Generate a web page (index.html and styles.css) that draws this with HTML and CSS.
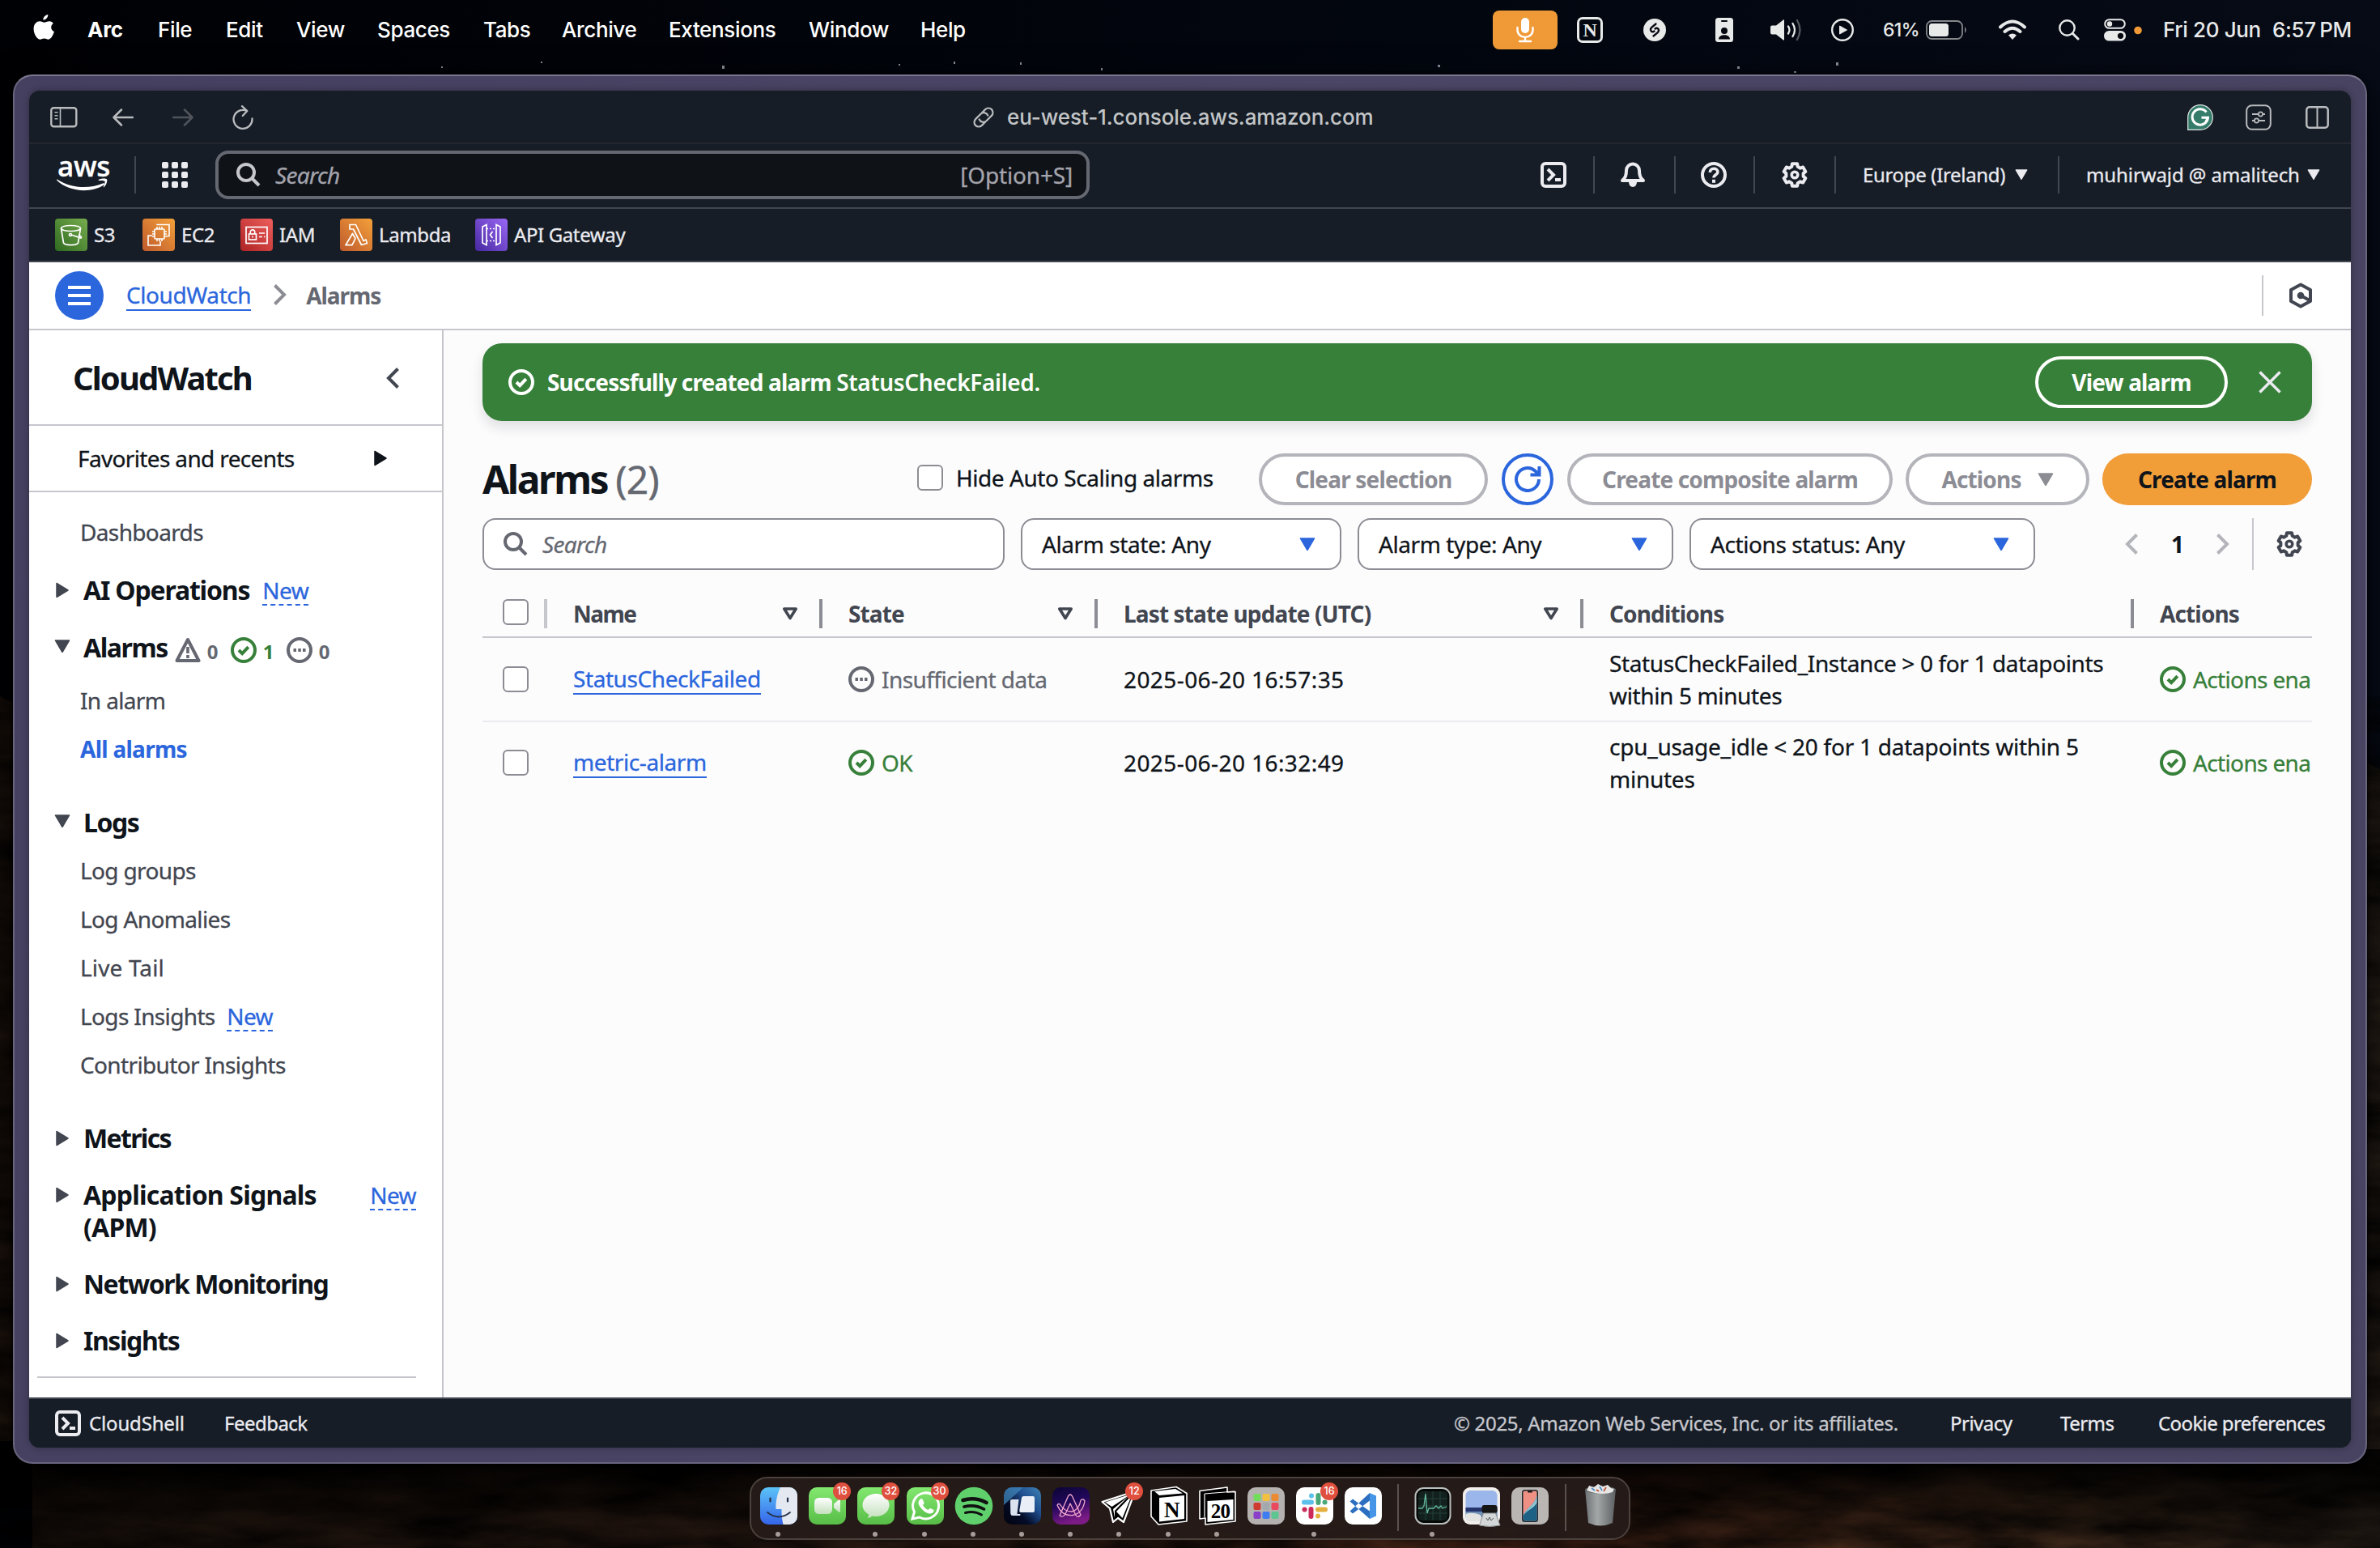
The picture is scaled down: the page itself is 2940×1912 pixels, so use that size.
FILE: index.html
```html
<!DOCTYPE html>
<html lang="en">
<head>
<meta charset="utf-8">
<title>Alarms | CloudWatch</title>
<link rel="stylesheet" href="styles.css">
</head>
<body>
<svg class="defs" width="0" height="0">
  <defs>
    <symbol id="ok" viewBox="0 0 32 32"><circle cx="16" cy="16" r="14" fill="none" stroke="currentColor" stroke-width="4"/><path d="M10 16l4.2 4.2 7.6-8" fill="none" stroke="currentColor" stroke-width="4"/></symbol>
    <symbol id="pending" viewBox="0 0 32 32"><circle cx="16" cy="16" r="14" fill="none" stroke="currentColor" stroke-width="4"/><path d="M8.5 16h3.5M14.3 16h3.5M20 16h3.5" stroke="currentColor" stroke-width="4"/></symbol>
    <symbol id="glass" viewBox="0 0 32 32"><circle cx="13" cy="13" r="10" fill="none" stroke="currentColor" stroke-width="4"/><path d="M20 20l9 9" stroke="currentColor" stroke-width="4"/></symbol>
    <symbol id="gear" viewBox="0 0 32 32"><path d="M12.3 5.85L12.85 2.36H19.15L19.7 5.85L22.94 7.73L26.24 6.45L29.39 11.91L26.64 14.12V17.88L29.39 20.09L26.24 25.55L22.94 24.27L19.7 26.15L19.15 29.64H12.85L12.3 26.15L9.06 24.27L5.76 25.55L2.61 20.09L5.36 17.88V14.12L2.61 11.91L5.76 6.45L9.06 7.73Z" fill="none" stroke="currentColor" stroke-width="4" stroke-linejoin="round"/><circle cx="16" cy="16" r="3.8" fill="none" stroke="currentColor" stroke-width="3.6"/></symbol>
    <symbol id="shell" viewBox="0 0 32 32"><rect x="2" y="2" width="28" height="28" rx="4" fill="none" stroke="currentColor" stroke-width="4"/><path d="M9 9l7 7-7 7M18 22h7" fill="none" stroke="currentColor" stroke-width="4"/></symbol>
    <symbol id="down" viewBox="0 0 20 16"><path d="M1.5 1h17L10 15.500z" fill="currentColor" stroke="currentColor" stroke-width="1.500" stroke-linejoin="round"/></symbol>
    <symbol id="right" viewBox="0 0 16 20"><path d="M1 1.500v17L15 10z" fill="currentColor" stroke="currentColor" stroke-width="1.500" stroke-linejoin="round"/></symbol>
    <symbol id="sort" viewBox="0 0 20 16"><path d="M2.800 2h14.400L10 13.500z" fill="none" stroke="currentColor" stroke-width="3.600" stroke-linejoin="round"/></symbol>
    <symbol id="lt" viewBox="0 0 16 26"><path d="M14.500 1.500L3 13l11.500 11.500" fill="none" stroke="currentColor" stroke-width="4"/></symbol>
    <symbol id="gt" viewBox="0 0 16 26"><path d="M1.500 1.500L13 13 1.500 24.500" fill="none" stroke="currentColor" stroke-width="4"/></symbol>
    <linearGradient id="gGreen" x1="0" y1="1" x2="1" y2="0"><stop offset="0" stop-color="#2f6a20"/><stop offset="1" stop-color="#77ad4e"/></linearGradient>
    <linearGradient id="gOrange" x1="0" y1="1" x2="1" y2="0"><stop offset="0" stop-color="#bf5a2c"/><stop offset="1" stop-color="#f3a03a"/></linearGradient>
    <linearGradient id="gRed" x1="0" y1="1" x2="1" y2="0"><stop offset="0" stop-color="#ad2223"/><stop offset="1" stop-color="#ee5f5c"/></linearGradient>
    <linearGradient id="gPurple" x1="0" y1="1" x2="1" y2="0"><stop offset="0" stop-color="#4628a0"/><stop offset="1" stop-color="#9b68f5"/></linearGradient>
    <linearGradient id="gLime" x1="0" y1="0" x2="0" y2="1"><stop offset="0" stop-color="#82e870"/><stop offset="1" stop-color="#58bd46"/></linearGradient>
    <linearGradient id="gPearl" x1="0" y1="0" x2="0" y2="1"><stop offset="0" stop-color="#fff"/><stop offset="1" stop-color="#c4e0bd"/></linearGradient>
    <linearGradient id="gSky" x1="0" y1="0" x2="0" y2="1"><stop offset="0" stop-color="#5cc3f7"/><stop offset="1" stop-color="#3565ea"/></linearGradient>
    <linearGradient id="gCards" x1="1" y1="0" x2="0" y2="1"><stop offset="0" stop-color="#3f83b5"/><stop offset=".35" stop-color="#1f4f90"/><stop offset=".65" stop-color="#050c28"/><stop offset="1" stop-color="#01030c"/></linearGradient>
    <linearGradient id="gArc" x1="0" y1="0" x2=".3" y2="1"><stop offset="0" stop-color="#0b0535"/><stop offset=".5" stop-color="#22085c"/><stop offset="1" stop-color="#7c1a86"/></linearGradient>
    <linearGradient id="gBin" x1="0" y1="0" x2="1" y2="0"><stop offset="0" stop-color="#6d7173"/><stop offset=".4" stop-color="#a4a7a8"/><stop offset="1" stop-color="#5c6062"/></linearGradient>
  </defs>
</svg>
<svg class="wallpaper" width="2940" height="1912" viewBox="0 0 2940 1912">
  <defs>
    <linearGradient id="sky" x1="0" y1="0" x2="1" y2="0"><stop offset="0" stop-color="#000104"/><stop offset=".6" stop-color="#02060f"/><stop offset="1" stop-color="#060b16"/></linearGradient>
    <linearGradient id="ground" x1="0" y1="0" x2="1" y2="0"><stop offset="0" stop-color="#1c120c"/><stop offset=".35" stop-color="#2a1a12"/><stop offset=".65" stop-color="#432215"/><stop offset=".85" stop-color="#412a1b"/><stop offset="1" stop-color="#241c16"/></linearGradient>
    <linearGradient id="shade" x1="0" y1="0" x2="0" y2="1"><stop offset="0" stop-color="#000" stop-opacity=".85"/><stop offset="1" stop-color="#000" stop-opacity=".05"/></linearGradient>
    <filter id="rock" x="0" y="0" width="100%" height="100%"><feTurbulence type="fractalNoise" baseFrequency=".008 .03" numOctaves="5" seed="7"/><feColorMatrix values="0 0 0 0 0  0 0 0 0 0  0 0 0 0 0  1.500 0 0 0 -.35"/></filter>
  </defs>
  <rect width="2940" height="1912" fill="url(#sky)"/>
  <path d="M0 860L40 880V1912H2940V950l-40-20V1780H0z" fill="url(#ground)"/>
  <rect y="860" width="2940" height="1052" filter="url(#rock)"/>
  <rect y="1790" width="2940" height="122" fill="url(#shade)"/>
  <g fill="#8b919c"><rect x="545" y="82" width="2" height="2"/><rect x="892" y="81" width="3" height="4"/><rect x="668" y="76" width="2" height="2"/><rect x="1110" y="79" width="2" height="2"/><rect x="1178" y="76" width="2" height="3"/><rect x="1260" y="77" width="2" height="3"/><rect x="1360" y="84" width="2" height="3"/><rect x="1776" y="80" width="3" height="3"/><rect x="2146" y="82" width="3" height="3"/><rect x="2268" y="77" width="3" height="4"/><rect x="2216" y="88" width="3" height="2"/></g>
</svg>

<div class="screen">
  <header class="menubar">
    <nav class="menus">
      <svg width="27" height="32" viewBox="0 0 27 32"><path d="M18.300 0c.3 3.400-2.800 6.700-5.900 6.600C12 3.500 15.200.4 18.300 0zM24.800 10.900c-3.300 2-3.900 7.700 1.200 10.200-1.500 4.800-4.400 9.700-7.400 9.700-2 0-2.500-1.200-4.900-1.200s-3.100 1.200-5 1.200C4.600 30.800.6 23.900.6 17.600.6 11.700 4.300 8.300 8.100 8.300c2.400 0 4.100 1.500 5.700 1.500 1.500 0 3.400-1.600 6.300-1.600 1.900 0 3.700 1 4.700 2.700z" fill="#fff"/></svg>
      <b>Arc</b><span>File</span><span>Edit</span><span>View</span><span>Spaces</span><span>Tabs</span><span>Archive</span><span>Extensions</span><span>Window</span><span>Help</span>
    </nav>
    <div class="tray">
      <span class="mic"><svg width="22" height="32" viewBox="0 0 22 32"><rect x="6" y="1" width="10" height="19" rx="5" fill="#fff"/><path d="M1.500 13v3a9.500 9 0 0 0 19 0v-3M11 25v4M4 30h14" fill="none" stroke="#fff" stroke-width="2.400" stroke-linecap="round"/></svg></span>
      <span class="notion">N</span>
      <svg width="28" height="28" viewBox="0 0 28 28"><circle cx="14" cy="14" r="14" fill="#e8e9e9"/><path d="M15.500 6.500l-5 4.200c-3.500 3.200 0 7.300 3 4.800M12.500 21.500l5-4.200c3.500-3.200 0-7.300-3-4.800" fill="none" stroke="#05080f" stroke-width="2.300" stroke-linecap="round"/></svg>
      <svg width="22" height="30" viewBox="0 0 22 30"><rect width="22" height="30" rx="3.500" fill="#e8e9e9"/><rect x="7" y="3" width="8" height="2" rx="1" fill="#05080f"/><circle cx="11" cy="16" r="4" fill="#05080f"/><path d="M4 26.500c0-7 14-7 14 0z" fill="#05080f"/></svg>
      <svg width="39" height="28" viewBox="0 0 39 28"><path d="M0 10.500q0-2 2-2h5L16 1.500q1-.8 1 .8v23.500q0 1.500-1 .7L7 19.500H2q-2 0-2-2z" fill="#e8e9e9"/><path d="M22 9.500q3 4.500 0 9M27.500 6q5 8 0 16" fill="none" stroke="#e8e9e9" stroke-width="2.300" stroke-linecap="round"/><path d="M33 2q7 12 0 24" fill="none" stroke="#55585d" stroke-width="2.300" stroke-linecap="round"/></svg>
      <svg width="28" height="28" viewBox="0 0 28 28"><circle cx="14" cy="14" r="12.800" fill="none" stroke="#e8e9e9" stroke-width="2.400"/><path d="M10.500 9v10l9-5z" fill="#e8e9e9" stroke="#e8e9e9" stroke-linejoin="round"/></svg>
      <span class="pct">61%</span>
      <svg width="52" height="24" viewBox="0 0 52 24"><rect x="1" y="1" width="44" height="22" rx="6.500" fill="none" stroke="#85878b" stroke-width="1.800"/><rect x="4" y="4" width="24" height="16" rx="3.500" fill="#e8e9e9"/><path d="M48 8q3.500 4 0 8z" fill="#85878b"/></svg>
      <svg width="34" height="26" viewBox="0 0 34 26"><path d="M2 9.500q15-14 30 0M7.500 15q9.500-8.500 19 0" fill="none" stroke="#e8e9e9" stroke-width="4" stroke-linecap="round"/><path d="M12 19.500q5-4 10 0L17 25z" fill="#e8e9e9"/></svg>
      <svg width="26" height="26" viewBox="0 0 26 26"><circle cx="10.500" cy="10.500" r="9.200" fill="none" stroke="#e8e9e9" stroke-width="2.400"/><path d="M17.500 17.500l6.500 6.500" stroke="#e8e9e9" stroke-width="3" stroke-linecap="round"/></svg>
      <svg width="47" height="28" viewBox="0 0 47 28"><rect x="1.200" y="1.200" width="24.600" height="10.600" rx="5.300" fill="none" stroke="#e8e9e9" stroke-width="2"/><circle cx="7" cy="6.500" r="3.200" fill="#e8e9e9"/><rect y="15" width="27" height="12.600" rx="6.300" fill="#e8e9e9"/><circle cx="20.500" cy="21.300" r="3.600" fill="#05080f"/><circle cx="42" cy="14.500" r="4.800" fill="#f09a37"/></svg>
      <span>Fri 20 Jun</span><span class="time">6:57 PM</span>
    </div>
  </header>

  <main class="window">
   <div class="page">
    <div class="urlbar">
      <svg width="34" height="26" viewBox="0 0 34 26"><rect x="1.300" y="1.300" width="31" height="23" rx="3" fill="none" stroke="#b9bbbe" stroke-width="2.400"/><path d="M12.500 1v24M5.500 6.800h4M5.500 10.800h4M5.500 14.800h4" stroke="#b9bbbe" stroke-width="1.600"/></svg>
      <svg width="26" height="22" viewBox="0 0 26 22"><path d="M25 11H2M11 1.500L1.500 11l9.500 9.500" fill="none" stroke="#b9bbbe" stroke-width="2.500" stroke-linecap="round" stroke-linejoin="round"/></svg>
      <svg width="26" height="22" viewBox="0 0 26 22"><path d="M1 11h23M15 1.500l9.500 9.500-9.500 9.500" fill="none" stroke="#50545a" stroke-width="2.500" stroke-linecap="round" stroke-linejoin="round"/></svg>
      <svg width="26" height="30" viewBox="0 0 26 30"><path d="M24.500 16.500A11.500 11.500 0 1 1 18 7M12 1.200l6.300 5.800-5.500 6" fill="none" stroke="#b9bbbe" stroke-width="2.300" stroke-linecap="round" stroke-linejoin="round"/></svg>
      <svg width="28" height="28" viewBox="0 0 28 28"><g transform="rotate(-45 14 14)" fill="none" stroke="#b9bbbe" stroke-width="2.200" stroke-linecap="round"><path d="M11 19.500H5.500a5.500 5.500 0 0 1 0-11h9a5.500 5.500 0 0 1 5 7.500"/><path d="M17 8.500h5.500a5.500 5.500 0 0 1 0 11h-9a5.500 5.500 0 0 1-5-7.500"/></g></svg>
      <span class="url">eu-west-1.console.aws.amazon.com</span>
      <svg width="32" height="32" viewBox="0 0 32 32"><path d="M.7 31.300V16A15.300 15.300 0 1 1 16 31.300z" fill="#367c6b" stroke="#e3e8e7" stroke-width="1.200"/><path d="M23.500 9.500A9.700 9.700 0 1 0 25.500 16.200H17.500M25.500 16.200l-2.500 5" fill="none" stroke="#fff" stroke-width="3"/></svg>
      <svg width="32" height="32" viewBox="0 0 32 32"><rect x="1.200" y="1.200" width="29.600" height="29.600" rx="6.500" fill="none" stroke="#b9bbbe" stroke-width="2"/><path d="M8 12h8M21 12h3M8 20h3M16 20h8" stroke="#b9bbbe" stroke-width="2"/><circle cx="18.500" cy="12" r="2.600" fill="none" stroke="#b9bbbe" stroke-width="1.700"/><circle cx="13.500" cy="20" r="2.600" fill="none" stroke="#b9bbbe" stroke-width="1.700"/></svg>
      <svg width="29" height="28" viewBox="0 0 29 28"><rect x="1.300" y="1.300" width="26.400" height="25.400" rx="3.500" fill="none" stroke="#b9bbbe" stroke-width="2.500"/><path d="M14.500 1v26" stroke="#b9bbbe" stroke-width="2"/></svg>
    </div>

    <div class="awsbar">
      <div class="aws"><span>aws</span><svg width="64" height="16" viewBox="0 0 64 16"><path d="M.5 1.500C18 13 40 13.500 57 6.500c1.500-.6 2.800 1 1.300 2C42 19 15 17 .3 2.800-.2 2 .1 1.200.5 1.500z" fill="#fff"/><path d="M52 1.800c4-1.600 9-1.500 10-.3s-.2 6.500-3.400 9.600c-.6.500-1 .2-.8-.4 1-2.400 2.300-6 1.600-7s-4.400-.8-7-.8c-.9 0-1.100-.7-.4-1.100z" fill="#fff"/></svg></div>
      <i class="vr"></i>
      <svg class="apps" width="32" height="32" viewBox="0 0 32 32" fill="#ebebf0"><rect width="8" height="8" rx="2"/><rect x="12" width="8" height="8" rx="2"/><rect x="24" width="8" height="8" rx="2"/><rect y="12" width="8" height="8" rx="2"/><rect x="12" y="12" width="8" height="8" rx="2"/><rect x="24" y="12" width="8" height="8" rx="2"/><rect y="24" width="8" height="8" rx="2"/><rect x="12" y="24" width="8" height="8" rx="2"/><rect x="24" y="24" width="8" height="8" rx="2"/></svg>
      <div class="omni"><svg width="32" height="32"><use href="#glass"/></svg><em>Search</em><span>[Option+S]</span></div>
      <div class="tools">
        <svg width="32" height="32"><use href="#shell"/></svg><i class="vr"></i>
        <svg width="32" height="32" viewBox="0 0 32 32"><path d="M16 2.500a8 8 0 0 0-8 8c0 7-1.500 9-5 12.500h26c-3.500-3.500-5-5.500-5-12.500a8 8 0 0 0-8-8z" fill="none" stroke="currentColor" stroke-width="4" stroke-linejoin="round"/><path d="M11 25a5 6 0 0 0 10 0z" fill="currentColor"/></svg><i class="vr"></i>
        <svg width="32" height="32" viewBox="0 0 32 32"><circle cx="16" cy="16" r="14" fill="none" stroke="currentColor" stroke-width="4"/><path d="M11.300 13c0-6.500 9.600-6 9.600-.5 0 3.500-4.900 3-4.900 7" fill="none" stroke="currentColor" stroke-width="3.600"/><rect x="14" y="21.800" width="4" height="4" fill="currentColor"/></svg><i class="vr"></i>
        <svg width="32" height="32"><use href="#gear"/></svg><i class="vr"></i>
        <span class="region">Europe (Ireland)</span><svg class="caret" width="16" height="13"><use href="#down"/></svg><i class="vr"></i>
        <span class="user">muhirwajd @ amalitech</span><svg class="caret" width="16" height="13"><use href="#down"/></svg>
      </div>
    </div>

    <nav class="favs">
      <span><svg width="40" height="40" viewBox="0 0 40 40"><rect width="40" height="40" rx="4" fill="url(#gGreen)"/><g fill="none" stroke="#fff" stroke-width="1.700"><ellipse cx="19.500" cy="12" rx="12" ry="3.500"/><path d="M7.500 12l3 18c2 3.500 16 3.500 18 0l3-18M20 20l12 4c1.500-1-1-3-3-4"/><circle cx="19" cy="20" r="1.500"/></g></svg>S3</span>
      <span><svg width="40" height="40" viewBox="0 0 40 40"><rect width="40" height="40" rx="4" fill="url(#gOrange)"/><g fill="none" stroke="#fff" stroke-width="1.600"><rect x="15" y="13" width="12" height="12" rx="1"/><path d="M18 13v-3M21 13v-3M24 13v-3M18 28v-3M21 28v-3M24 28v-3M15 16h-3M15 19h-3M15 22h-3M30 16h-3M30 19h-3M30 22h-3M18 8V7.500h15v14h-3M12 21H7v12h15v-5"/></g></svg>EC2</span>
      <span><svg width="40" height="40" viewBox="0 0 40 40"><rect width="40" height="40" rx="4" fill="url(#gRed)"/><g fill="none" stroke="#fff" stroke-width="1.700"><rect x="7" y="10.500" width="26" height="20"/><rect x="10.500" y="19" width="9" height="7"/><path d="M12.300 19v-2.500a2.700 2.700 0 0 1 5.400 0V19M15 21.500v2M23 18h7M23 22.500h4M29 22.500h1.500"/></g></svg>IAM</span>
      <span><svg width="40" height="40" viewBox="0 0 40 40"><rect width="40" height="40" rx="4" fill="url(#gOrange)"/><path d="M12 7.500h7.500L29 27.500l3-1.500 1.500 4.500-7 2L16.500 13H12zM15.500 18.500l3.500 6-4 8.200H7z" fill="none" stroke="#fff" stroke-width="1.700" stroke-linejoin="round"/></svg>Lambda</span>
      <span><svg width="40" height="40" viewBox="0 0 40 40"><rect width="40" height="40" rx="4" fill="url(#gPurple)"/><g fill="none" stroke="#fff" stroke-width="1.700"><path d="M14 7.500l-5 2.500v20l5 2.500zM26 7.500l5 2.500v20l-5 2.500zM21.500 16l-3 4 3 4"/><path d="M14 12.500h12M14 27.500h12" stroke-dasharray="2 2"/></g></svg>API Gateway</span>
    </nav>

    <div class="crumbs">
      <span class="burger"><i></i><i></i><i></i></span>
      <a class="lnk">CloudWatch</a>
      <svg class="dim" width="16" height="26"><use href="#gt"/></svg>
      <b>Alarms</b>
      <i class="sep"></i>
      <svg class="ink" width="32" height="32" viewBox="0 0 32 32"><path d="M16 2.500L28 9v14l-12 6.500L4 23V9z" fill="none" stroke="currentColor" stroke-width="4" stroke-linejoin="round"/><circle cx="16" cy="16" r="4.300" fill="currentColor"/><path d="M16 16l11 6" stroke="currentColor" stroke-width="4"/></svg>
    </div>

    <div class="body">
      <aside class="side">
        <div class="side-head"><h2>CloudWatch</h2><svg class="ink" width="16" height="26"><use href="#lt"/></svg></div>
        <div class="side-fav"><span>Favorites and recents</span><svg width="16" height="20"><use href="#right"/></svg></div>
        <div class="nav">
          <a class="item">Dashboards</a>
          <div class="sec ai"><svg width="16" height="20"><use href="#right"/></svg><b>AI Operations</b><a class="new">New</a></div>
          <div class="sec al"><svg class="open" width="20" height="16"><use href="#down"/></svg><b>Alarms</b>
            <span class="counts"><svg width="32" height="32" viewBox="0 0 32 32"><path d="M16 3L29.500 29h-27z" fill="none" stroke="currentColor" stroke-width="4" stroke-linejoin="round"/><path d="M16 12v8M16 22v4" stroke="currentColor" stroke-width="3.600"/></svg><b>0</b><svg class="green" width="32" height="32"><use href="#ok"/></svg><b class="green">1</b><svg width="32" height="32"><use href="#pending"/></svg><b>0</b></span></div>
          <a class="item in">In alarm</a>
          <a class="item active">All alarms</a>
          <div class="sec lg"><svg class="open" width="20" height="16"><use href="#down"/></svg><b>Logs</b></div>
          <a class="item lgs">Log groups</a>
          <a class="item">Log Anomalies</a>
          <a class="item tail">Live Tail</a>
          <a class="item">Logs Insights <span class="new">New</span></a>
          <a class="item">Contributor Insights</a>
          <div class="sec me"><svg width="16" height="20"><use href="#right"/></svg><b>Metrics</b></div>
          <div class="sec ap"><svg width="16" height="20"><use href="#right"/></svg><b>Application Signals (APM)</b><a class="new far">New</a></div>
          <div class="sec"><svg width="16" height="20"><use href="#right"/></svg><b>Network Monitoring</b></div>
          <div class="sec last"><svg width="16" height="20"><use href="#right"/></svg><b>Insights</b></div>
          <hr>
        </div>
      </aside>

      <section class="content">
        <div class="flash">
          <svg width="32" height="32"><use href="#ok"/></svg>
          <b>Successfully created alarm <span>StatusCheckFailed.</span></b>
          <button class="ghost">View alarm</button>
          <svg width="28" height="28" viewBox="0 0 28 28"><path d="M1.500 1.500l25 25M26.500 1.500l-25 25" stroke="#ebebf0" stroke-width="3.400"/></svg>
        </div>
        <div class="head">
          <h1>Alarms <span>(2)</span></h1>
          <label><i class="box"></i>Hide Auto Scaling alarms</label>
          <button class="btn clear">Clear selection</button>
          <button class="round"><svg width="34" height="34" viewBox="0 0 34 34"><path d="M31 17A14 14 0 1 1 26.500 6.700L30 10M31.500 1v10.500H20.500" fill="none" stroke="currentColor" stroke-width="4"/></svg></button>
          <button class="btn comp">Create composite alarm</button>
          <button class="btn act">Actions<svg width="20" height="16"><use href="#down"/></svg></button>
          <button class="btn primary">Create alarm</button>
        </div>
        <div class="filters">
          <div class="field find"><svg width="32" height="32"><use href="#glass"/></svg><em>Search</em></div>
          <div class="field">Alarm state: Any<svg width="20" height="16"><use href="#down"/></svg></div>
          <div class="field">Alarm type: Any<svg width="20" height="16"><use href="#down"/></svg></div>
          <div class="field">Actions status: Any<svg width="20" height="16"><use href="#down"/></svg></div>
          <div class="pager"><svg width="16" height="26"><use href="#lt"/></svg><b>1</b><svg width="16" height="26"><use href="#gt"/></svg><i class="sep"></i><svg class="ink" width="32" height="32"><use href="#gear"/></svg></div>
        </div>
        <div class="table">
          <div class="tr th">
            <div class="ck"><i class="box"></i></div>
            <div class="name">Name<svg width="20" height="16"><use href="#sort"/></svg></div>
            <div>State<svg width="20" height="16"><use href="#sort"/></svg></div>
            <div>Last state update (UTC)<svg width="20" height="16"><use href="#sort"/></svg></div>
            <div>Conditions</div>
            <div>Actions</div>
          </div>
          <div class="tr">
            <div class="ck"><i class="box"></i></div>
            <div><a class="lnk">StatusCheckFailed</a></div>
            <div class="muted"><svg width="32" height="32"><use href="#pending"/></svg>Insufficient data</div>
            <div class="date">2025-06-20 16:57:35</div>
            <div class="cond">StatusCheckFailed_Instance &gt; 0 for 1 datapoints<br>within 5 minutes</div>
            <div class="green clip"><svg width="32" height="32"><use href="#ok"/></svg>Actions ena</div>
          </div>
          <div class="tr">
            <div class="ck"><i class="box"></i></div>
            <div><a class="lnk">metric-alarm</a></div>
            <div class="green"><svg width="32" height="32"><use href="#ok"/></svg>OK</div>
            <div class="date">2025-06-20 16:32:49</div>
            <div class="cond cpu">cpu_usage_idle &lt; 20 for 1 datapoints within 5<br>minutes</div>
            <div class="green clip"><svg width="32" height="32"><use href="#ok"/></svg>Actions ena</div>
          </div>
        </div>
      </section>
    </div>

    <footer class="foot">
      <svg width="32" height="32"><use href="#shell"/></svg><span class="cs">CloudShell</span><span>Feedback</span>
      <span class="copy">© 2025, Amazon Web Services, Inc. or its affiliates.</span><span>Privacy</span><span>Terms</span><span class="cookie">Cookie preferences</span>
    </footer>
   </div>
  </main>

  <div class="dock">
    <div class="app run"><svg viewBox="0 0 46 46"><rect width="46" height="46" rx="10" fill="url(#gSky)"/><path d="M25 0C21 9 19 17 19.500 27h7c-.2 7 .5 13 2 19H36a10 10 0 0 0 10-10V10A10 10 0 0 0 36 0z" fill="#e4e8f0"/><path d="M12.500 13.500v4M34 13.500v4" stroke="#243048" stroke-width="2.200" stroke-linecap="round"/><path d="M9 31q14 11 28 0" fill="none" stroke="#243048" stroke-width="1.800" stroke-linecap="round"/></svg></div>
    <div class="app"><svg viewBox="0 0 46 46"><rect width="46" height="46" rx="10" fill="url(#gLime)"/><rect x="7" y="13" width="22" height="20" rx="5.500" fill="url(#gPearl)"/><path d="M31 20.500l6-5q2-1 2 1v13q0 2-2 1l-6-5z" fill="url(#gPearl)"/></svg><sup>16</sup></div>
    <div class="app run"><svg viewBox="0 0 46 46"><rect width="46" height="46" rx="10" fill="url(#gLime)"/><path d="M23 8c10 0 16.500 6.500 16.500 14S33 36 23 36q-2.500 0-4.500-.6-2 2-6 2.600 2-2.500 1.500-4.500C9 30.500 6.500 26.500 6.500 22 6.500 14.500 13 8 23 8z" fill="url(#gPearl)"/></svg><sup>32</sup></div>
    <div class="app run"><svg viewBox="0 0 46 46"><rect width="46" height="46" rx="10" fill="url(#gLime)"/><path d="M7 39l2.500-8.500A16 16 0 1 1 16 37z" fill="none" stroke="#fff" stroke-width="3"/><path d="M16.500 15q2-2 3.500.5l1.500 3.500q.5 1-1.500 3 2.500 4.500 6.500 6 2-2.500 3-2l4 2q.5 4-4.500 4.500C23 33 14 23 14.500 18.500q.5-2.500 2-3.500z" fill="#fff"/></svg><sup>30</sup></div>
    <div class="app run"><svg viewBox="0 0 46 46"><circle cx="23" cy="23" r="23.300" fill="#5fd06b"/><g fill="none" stroke="#111" stroke-linecap="round"><path d="M9.500 16q15-4.500 29 3" stroke-width="4.500"/><path d="M11 24q13-3.500 24.500 3" stroke-width="3.700"/><path d="M12.500 31.500q11-3 20 2.500" stroke-width="3"/></g></svg></div>
    <div class="app run"><svg viewBox="0 0 46 46"><rect width="46" height="46" rx="10" fill="url(#gCards)"/><path d="M0 22V10A10 10 0 0 1 10 0h14z" fill="#3f83b5" opacity=".75"/><path d="M10 15h8.500l-2 18h4l-.3 2H11q-2.500 0-2.700-2.500L8 17q0-2 2-2z" fill="#dbe2f0"/><path d="M24.500 11H36q2 0 2 2v16q0 2-2 2H21q-2 0-1.800-2L22 13q.3-2 2.500-2z" fill="#e9eef7"/></svg></div>
    <div class="app run"><svg viewBox="0 0 46 46"><rect width="46" height="46" rx="10" fill="url(#gArc)"/><g fill="none" stroke="#f3a9cf" stroke-width="1.300" stroke-linejoin="round"><path d="M19.500 11q2.500-4 5 0l10.500 23q-3.500 4.500-6 .5L22 20l-6 13q-3 5-7 2z"/><path d="M6 22q2-3 4 0 5 8 14 8 9-2 11-14 3.500-2.500 5 1-2.500 15-15 17.500Q12 36 6 22z"/></g></svg></div>
    <div class="app run"><svg viewBox="0 0 46 46"><path d="M1.500 18L42 5 28 43l-7-5-6 5-4-17z" fill="#000" stroke="#fff" stroke-width="2.200" stroke-linejoin="round"/><path d="M5 18.500L37 8.500 13.500 24zM38 10L26.500 38l-7.500-8zM15 27l19-16-17 18v9z" fill="#fff"/></svg><sup>12</sup></div>
    <div class="app run"><svg viewBox="0 0 46 46"><path d="M1 4L32-.5l13 8V42L10 46 1 36z" fill="#000" stroke="#fff" stroke-width="1.600" stroke-linejoin="round"/><path d="M5 5L31 2l9 5.500-29 2.500zM11 13l31-3v29l-31 3.500z" fill="#fff"/><text x="26.500" y="36.500" text-anchor="middle" class="serif" font-size="27">N</text></svg></div>
    <div class="app run"><svg viewBox="0 0 46 46"><path d="M1 4.500L35 0v6l10-.5V42L8 46v-8l-7 1z" fill="#000" stroke="#fff" stroke-width="1.600" stroke-linejoin="round"/><path d="M10.500 17l32-2v25l-32 3z" fill="#fff"/><path d="M7 8v29M7 8l37-3" stroke="#fff" stroke-width="1.200"/><text x="26.500" y="37.500" text-anchor="middle" class="serif" font-size="25">20</text></svg></div>
    <div class="app"><svg viewBox="0 0 46 46"><rect width="46" height="46" rx="10" fill="#b4b1b0"/><rect x="7.500" y="8" width="9" height="9" rx="2" fill="#73dd5b"/><rect x="18.500" y="8" width="9" height="9" rx="2" fill="#f2bf3f"/><rect x="29.500" y="8" width="9" height="9" rx="2" fill="#ec8a34"/><rect x="7.500" y="19" width="9" height="9" rx="2" fill="#ce3a30"/><rect x="18.500" y="19" width="9" height="9" rx="2" fill="#a3a8ac"/><rect x="29.500" y="19" width="9" height="9" rx="2" fill="#ea4a5e"/><rect x="7.500" y="30" width="9" height="9" rx="2" fill="#8a3fc9"/><rect x="18.500" y="30" width="9" height="9" rx="2" fill="#3d7df0"/><rect x="29.500" y="30" width="9" height="9" rx="2" fill="#5cc590"/></svg></div>
    <div class="app run"><svg viewBox="0 0 46 46"><rect width="46" height="46" rx="10" fill="#fff"/><g fill="none" stroke-width="6" stroke-linecap="round"><path d="M10 18.500h9M19 10.500v.1" stroke="#5cc0ea"/><path d="M27.500 10v9M35.500 18.500h.1" stroke="#4aa878"/><path d="M36 27.500h-9M27 35.500v.1" stroke="#e3b040"/><path d="M18.500 36v-9M10.500 27.500h.1" stroke="#cc2a58"/></g></svg><sup>16</sup></div>
    <div class="app"><svg viewBox="0 0 46 46"><rect width="46" height="46" rx="10" fill="#fff"/><path d="M31 7L39 10.500V35.500L31 39z" fill="#4795e6"/><path d="M31 7v9.500L10 32.500 6.500 29.500zM31 39V29.500L10 14.500 6.500 17.500z" fill="#2c6fc0"/></svg></div>
    <i class="bar"></i>
    <div class="app run"><svg viewBox="0 0 46 46"><rect x="1.500" y="1" width="43" height="44" rx="10" fill="#050807" stroke="#b9c0bf" stroke-width="2"/><rect x="5" y="5" width="36" height="36" rx="5" fill="#13211e"/><path d="M5 14h36M5 23h36M5 32h36M14 5v36M23 5v36M32 5v36" stroke="#24403a"/><path d="M5 26h5l2-3 2-15 2 24 2-6h6l3-3 3 3 3-3 2 3 5-2" fill="none" stroke="#62b89d" stroke-width="1.300"/></svg></div>
    <div class="app"><svg viewBox="0 0 46 46"><rect width="46" height="46" rx="9" fill="#f1eeec"/><rect x="3.500" y="4" width="39" height="38" rx="6" fill="#9bb6ea"/><path d="M3.500 25h39v5h-39z" fill="#26346e"/><path d="M3.500 30h39v10H9.500q-6 0-6-6z" fill="#6f8fb5"/><path d="M3.500 33q8-3 18 1l4 8H9.500q-6 0-6-6z" fill="#e3e4e2"/><rect x="23.500" y="22" width="19" height="10" rx="3" fill="#151515"/><path d="M25.500 32h15l5.500 15q-13 3-25.500 0z" fill="#d4d7d8" stroke="#8e9192"/><path d="M29 38l2 3 2-4 2 4 3-3" fill="none" stroke="#555"/></svg></div>
    <div class="app"><svg viewBox="0 0 46 46"><rect width="46" height="46" rx="10" fill="#b9b6b4"/><rect x="13" y="3" width="20" height="40" rx="3.500" fill="#1c2830"/><rect x="14.500" y="4.500" width="17" height="37" rx="2" fill="#ee9184"/><path d="M31.500 10C29 22 19 24 14.500 35v4.500q0 2 2 2h13q2 0 2-2z" fill="#1d6284"/><path d="M31.500 10C29 22 19 24 14.500 35c6-8 14-9 17-16z" fill="#8fc3cf"/><rect x="20" y="4.500" width="6" height="2" rx="1" fill="#111"/></svg></div>
    <i class="bar two"></i>
    <div class="app bin"><svg viewBox="0 0 46 54"><path d="M4 6h38l-4 42q-15 7-30 0z" fill="url(#gBin)"/><ellipse cx="23" cy="7" rx="19" ry="4.500" fill="#55585a"/><path d="M6 8l3-6 6 2 5-4 6 3 6-2 4 4 4 1-2 4q-14 5-32-2z" fill="#e6e6e4"/><path d="M12 5l4 3M22 3l3 5" stroke="#4a8ac4" stroke-width="1.600"/><path d="M30 4l-3 5M18 7l3 2" stroke="#c2503c" stroke-width="1.600"/></svg></div>
  </div>
</div>
</body>
</html>
```

FILE: styles.css
```css
* { box-sizing: border-box; }
body { margin: 0; width: 2940px; height: 1912px; overflow: hidden; background: #010206; font: 28px/40px "Noto Sans", "Open Sans", sans-serif; letter-spacing: -0.023em; color: #0f141a; -webkit-text-stroke: 0.3px; }
svg { display: block; flex: none; }
i { font-style: normal; }
b, h1, h2 { font-weight: 700; letter-spacing: -0.045em; margin: 0; -webkit-text-stroke: 0; }
button { font: inherit; letter-spacing: -0.03em; padding: 0; margin: 0; -webkit-text-stroke: 0; }
.defs, .wallpaper { position: absolute; left: 0; top: 0; }
.screen { position: relative; display: flex; flex-direction: column; align-items: flex-start; height: 1912px; }

/* menu bar */
.menubar { width: 100%; height: 92px; padding-bottom: 18px; display: flex; justify-content: space-between; align-items: center; color: #fff; font: 500 26px/32px Inter, sans-serif; letter-spacing: -0.014em; white-space: nowrap; -webkit-text-stroke: 0; }
.menus { display: grid; grid-template-columns: 67px 87px 84px 87px 100px 131px 97px 132px 173px 138px 80px; padding-left: 41px; align-items: center; }
.menus b { letter-spacing: -0.01em; }
.menus svg { margin-top: -6px; }
.tray { display: grid; grid-template-columns: 104px 82px 89px 68px 75px 64px 53px 90px 74px 56px 73px 135px 133px; align-items: center; color: #e8e9e9; }
.mic { width: 80px; height: 48px; border-radius: 8px; background: #f09a37; display: flex; align-items: center; justify-content: center; }
.notion { width: 32px; height: 32px; border: 3px solid #e8e9e9; border-radius: 7px; font: bold 24px/26px "Liberation Serif", serif; text-align: center; }
.pct { font-size: 23px; letter-spacing: -0.03em; }
.time { word-spacing: -2px; }

/* browser window */
.window { margin-left: 16px; width: 2908px; height: 1716px; padding: 18px; border: 2px solid #7b778f; border-color: #7b778f #68647e #68647e #68647e; border-radius: 24px; background: linear-gradient(100deg, #454060, #4b4665 50%, #484361); box-shadow: 0 0 4px #000, 0 10px 40px #000b; }
.page { height: 1676px; width: 2868px; border-radius: 13px; overflow: hidden; background: #161d26; display: flex; flex-direction: column; box-shadow: 0 0 10px #0005; }
.urlbar { height: 66px; border-bottom: 2px solid #23262f; display: grid; grid-template-columns: 77px 74px 74px 914px 43px 1458px 72px 74px 40px; padding: 2px 0 0 26px; align-items: center; flex: none; }
.url { font: 500 26px/32px Inter, sans-serif; letter-spacing: -0.003em; color: #c3c5c7; -webkit-text-stroke: 0; }
.awsbar { height: 80px; border-bottom: 2px solid #424650; display: flex; align-items: center; padding: 0 0 2px 34px; flex: none; color: #ebebf0; }
.aws { width: 96px; display: flex; flex-direction: column; }
.aws span { font: 600 35px/28px "Open Sans", sans-serif; letter-spacing: -0.01em; color: #fff; padding-left: 1px; margin-top: -6px; }
.aws svg { margin-top: 1px; }
.vr { width: 2px; height: 46px; background: #424650; flex: none; }
.apps { margin: 0 34px 0 32px; }
.omni { width: 1080px; height: 60px; border: 4px solid #656871; border-radius: 16px; background: #0f1217; display: flex; align-items: center; padding: 0 17px 1px 21px; color: #a4a4ad; }
.omni svg { color: #c6c6cd; margin: 1px 17px 0 0; }
.omni span { margin-left: auto; letter-spacing: -0.006em; }
.tools { margin-left: 557px; display: grid; grid-template-columns: 65px 33px 67px 33px 65px 35px 65px 35px 188px 53px 35px 273px 20px; align-items: center; font-size: 24px; white-space: nowrap; }
.region, .user { margin-top: -1px; letter-spacing: -0.014em; }
.user { letter-spacing: -0.004em; }
.caret { margin-top: -1px; }
.favs { height: 66px; border-bottom: 2px solid #424650; display: grid; grid-template-columns: 108px 121px 123px 167px 300px; padding-left: 32px; align-items: center; font-size: 24px; color: #ebebf0; flex: none; letter-spacing: -0.016em; }
.favs span { display: flex; align-items: center; gap: 8px; }

.crumbs { height: 84px; background: #fff; border-bottom: 2px solid #c6c6cd; display: flex; align-items: center; padding: 0 46px 0 32px; flex: none; }
.burger { width: 60px; height: 60px; border-radius: 50%; background: #2b66dd; display: flex; flex-direction: column; align-items: center; justify-content: center; gap: 6px; margin-right: 28px; }
.burger i { width: 28px; height: 4px; background: #fff; }
.lnk { color: #2b66dd; border-bottom: 2px solid #2b66dd; line-height: 36px; letter-spacing: -0.015em; }
.crumbs .dim { margin: -2px 24px 0 28px; color: #8c8c94; }
.crumbs b { color: #656871; letter-spacing: -0.038em; }
.crumbs .sep { height: 50px; margin: 0 30px 0 auto; }
.sep { width: 2px; background: #c6c6cd; }
.ink { color: #424650; }
.green { color: #37803a; }

.body { display: flex; flex: 1; min-height: 0; background: #fcfcfd; }
.side { width: 512px; background: #fff; border-right: 2px solid #c6c6cd; overflow: hidden; flex: none; }
.side-head { height: 118px; border-bottom: 2px solid #c6c6cd; padding: 1px 53px 0 54px; display: flex; align-items: center; justify-content: space-between; }
.side-head h2 { font-size: 40px; letter-spacing: -0.047em; }
.side-fav { height: 82px; border-bottom: 2px solid #c6c6cd; padding: 0 68px 1px 60px; display: flex; align-items: center; justify-content: space-between; }
.nav { padding: 19px 32px 0 32px; }
.item { display: block; height: 60px; line-height: 60px; padding-left: 31px; color: #424650; }
.item.tail { letter-spacing: 0.005em; }
.item.active { color: #2b66dd; font-weight: 700; letter-spacing: -0.026em; -webkit-text-stroke: 0; }
.sec { display: flex; align-items: flex-start; min-height: 40px; margin-bottom: 30px; font-size: 32px; }
.sec > b { max-width: 320px; }
.sec > svg { margin: 10px 18px 0 1px; color: #424650; }
.sec > svg.open { margin: 10px 16px 0 -1px; }
.ai { margin-top: 22px; margin-bottom: 31px; }
.ai b { letter-spacing: -0.037em; }
.al, .lg { margin-bottom: 0; }
.in { margin-top: 15px; }
.lg { margin-top: 41px; }
.lgs { margin-top: 9px; }
.me { margin-top: 41px; }
.me b { letter-spacing: -0.052em; }
.ap b { letter-spacing: -0.025em; }
.sec.last { margin-bottom: 24px; }
.new { color: #2b66dd; font-size: 28px; line-height: 33px; border-bottom: 2px dashed #2b66dd; margin: 4px 0 0 16px; letter-spacing: -0.021em; }
.item .new { margin-left: 8px; display: inline-block; }
.new.far { margin-left: auto; }
.counts { display: flex; align-items: center; margin: 7px 0 0 9px; font-size: 24px; color: #656871; height: 32px; }
.counts b { width: 29px; margin-left: 8px; padding-top: 4px; }
.nav hr { border: 0; height: 2px; background: #c6c6cd; margin: 0 0 0 -22px; }

.content { flex: 1; padding: 16px 48px 0; min-width: 0; }
.flash { height: 96px; border-radius: 24px; background: #37803a; color: #fff; display: flex; align-items: center; padding: 0 38px 0 32px; box-shadow: 0 8px 16px #0f141a1f; }
.flash b { margin-left: 16px; letter-spacing: -0.029em; }
.flash b span { font-weight: 600; letter-spacing: -0.012em; }
.ghost { margin: 0 38px 0 auto; width: 238px; height: 64px; border: 4px solid #fff; border-radius: 32px; background: none; color: #fff; font-weight: 700; }
.head { display: flex; align-items: center; height: 64px; margin-top: 40px; }
h1 { font-size: 48px; line-height: 60px; width: 537px; letter-spacing: -0.05em; }
h1 span { font-weight: 400; color: #656871; letter-spacing: -0.02em; -webkit-text-stroke: 0.4px; }
.box { display: block; width: 32px; height: 32px; border: 2px solid #8c8c94; border-radius: 6px; background: #fff; flex: none; }
.head label { display: flex; gap: 16px; align-items: center; width: 422px; line-height: 44px; margin-top: -4px; white-space: nowrap; letter-spacing: -0.016em; }
.btn { height: 64px; border: 4px solid #b4b4bb; border-radius: 32px; background: #fff; color: #8c8c94; font-weight: 700; white-space: nowrap; display: flex; align-items: center; justify-content: center; flex: none; }
.clear { width: 283px; } .comp { width: 402px; } .act { width: 227px; margin: 0 16px; gap: 20px; }
.round { width: 64px; height: 64px; border: 4px solid #2b66dd; border-radius: 50%; background: #fff; color: #2b66dd; margin: 0 17px; display: flex; align-items: center; justify-content: center; flex: none; }
.primary { width: 259px; border: 0; background: #f19d38; color: #0f141a; }
.filters { display: grid; grid-template-columns: 645px 396px 390px 427px 322px; gap: 20px; height: 64px; margin-top: 16px; white-space: nowrap; letter-spacing: -0.015em; }
.field { border: 2px solid #8c8c94; border-radius: 16px; background: #fff; display: flex; align-items: center; justify-content: space-between; padding: 0 30px 0 24px; }
.field svg { color: #2b66dd; }
.find { justify-content: flex-start; color: #656871; letter-spacing: -0.023em; padding-left: 23px; }
.find svg { color: #656871; margin-right: 17px; }
.pager { display: flex; align-items: center; color: #b4b4bb; padding-left: 91px; }
.pager b { color: #0f141a; width: 97px; text-align: center; flex: none; }
.pager .sep { height: 64px; margin: 0 28px 0 28px; flex: none; }

.table { margin-top: 20px; }
.tr { display: grid; grid-template-columns: 80px 340px 340px 600px 680px 220px; align-items: center; }
.tr + .tr { border-bottom: 2px solid #ebebf0; height: 104px; }
.tr:last-child { border: 0; height: 100px; }
.tr > div { padding-left: 32px; display: flex; align-items: center; white-space: nowrap; }
.tr > .ck { padding-left: 25px; }
.th { height: 64px; border-bottom: 2px solid #c6c6cd; color: #424650; font-weight: 700; letter-spacing: -0.031em; -webkit-text-stroke: 0; }
.th > div { height: 36px; border-right: 4px solid #8c8c94; justify-content: space-between; padding-right: 26px; margin-top: 5px; }
.th > .name { letter-spacing: -0.055em; }
.th > .ck { border-color: #c6c6cd; }
.th .box { margin-top: -4px; }
.th > div:last-child { border: 0; }
.muted { color: #656871; letter-spacing: -0.02em; }
.tr > div > svg { margin-right: 9px; }
.th > div > svg { margin-right: 0 !important; }
.clip { overflow: hidden; }
.date { letter-spacing: 0.015em; }
.cond { letter-spacing: -0.013em; }
.cond.cpu { letter-spacing: -0.009em; }

.foot { height: 62px; border-top: 2px solid #424650; background: #161d26; color: #ebebf0; font-size: 24px; letter-spacing: -0.022em; display: grid; grid-template-columns: 42px 167px 1519px 613px 136px 121px 220px; align-items: center; padding-left: 32px; white-space: nowrap; flex: none; }
.cs { letter-spacing: -0.007em; }
.copy { color: #c6c6cd; letter-spacing: -0.013em; }
.cookie { letter-spacing: -0.025em; }

/* dock */
.dock { margin: 16px 0 0 926px; width: 1088px; height: 78px; border: 2px solid #4b413c; border-radius: 22px; background: #261b18f2; display: flex; align-items: flex-start; padding: 11px 0 0 11px; gap: 14.200px; -webkit-text-stroke: 0; }
.app { width: 46px; height: 46px; position: relative; flex: none; }
.app svg { width: 46px; height: 46px; overflow: visible; }
.app.run::after { content: ""; position: absolute; left: 19px; top: 55px; width: 6px; height: 6px; border-radius: 50%; background: #a79c98; }
.app sup { position: absolute; right: -6px; top: -6px; width: 22px; height: 22px; border-radius: 50%; background: #e0503f; color: #fff; font: 500 12.500px/22px Inter, sans-serif; letter-spacing: 0; text-align: center; }
.serif { font-family: "Liberation Serif", serif; font-weight: bold; }
.bar { width: 2px; height: 58px; margin: -4px 4px 0 5px; background: #5a504c; flex: none; }
.bar.two { margin: -4px 5px 0 6px; }
.bin svg { height: 54px; margin-top: -4px; }
```
